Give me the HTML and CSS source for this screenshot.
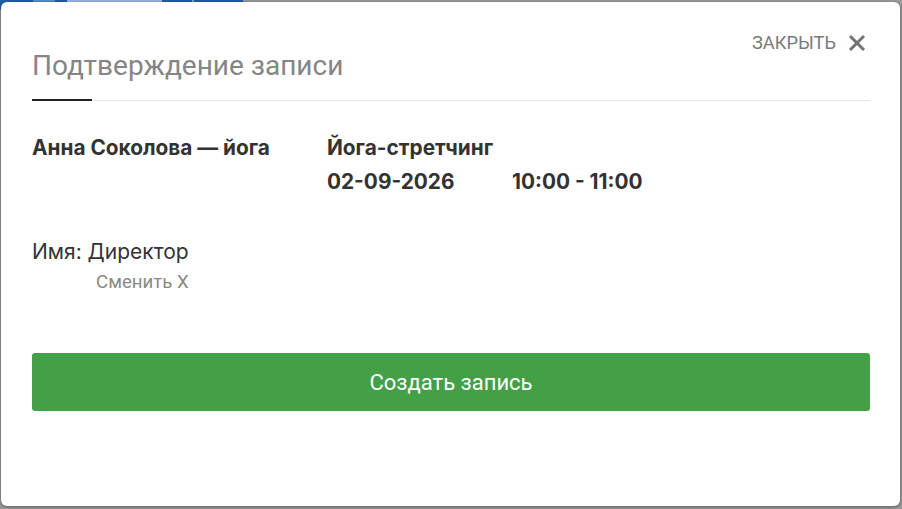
FILE: index.html
```html
<!DOCTYPE html>
<html lang="ru">
<head>
<meta charset="utf-8">
<title>Подтверждение записи</title>
<link rel="stylesheet" href="styles.css">
</head>
<body>
<div class="backdrop">
  <div class="topbar"><span class="topbar-tab"></span><span class="topbar-label"></span><span class="topbar-sep"></span></div>
</div>
<div class="modal">
  <div class="header">
    <h1 class="title">Подтверждение записи</h1>
    <button class="close">ЗАКРЫТЬ
      <svg class="close-icon" viewBox="0 0 18 18" width="18" height="18"><path d="M2 2 16 16M16 2 2 16" stroke="currentColor" stroke-width="3" fill="none"/></svg>
    </button>
  </div>
  <div class="details">
    <div class="trainer">Анна Соколова — йога</div>
    <div class="session">
      <div class="session-name">Йога-стретчинг</div>
      <div class="session-when">
        <span class="date">02-09-2026</span>
        <span class="time">10:00 - 11:00</span>
      </div>
    </div>
  </div>
  <div class="client">
    <div class="client-name">Имя: Директор</div>
    <a class="client-change">Сменить Х</a>
  </div>
  <button class="submit">Создать запись</button>
</div>
</body>
</html>
```
FILE: styles.css
```css
html, body {
  margin: 0;
  padding: 0;
  width: 902px;
  height: 509px;
  overflow: hidden;
  background: #9d9d9d;
  font-family: "Roboto", "Liberation Sans", sans-serif;
}
.backdrop {
  height: 509px;
}
.topbar {
  display: flex;
  align-items: flex-start;
  width: 243px;
  height: 10px;
  background: #1f5fb0;
}
.topbar-tab {
  width: 22px;
  height: 10px;
  margin-left: 33px;
  background: #5b8ed0;
}
.topbar-label {
  width: 95px;
  height: 3px;
  margin-left: 12px;
  background: #9fbbe0;
}
.topbar-sep {
  width: 2px;
  height: 10px;
  margin-left: 30px;
  background: #7aa0d6;
}
.modal {
  position: absolute;
  left: 1px;
  top: 2px;
  width: 899px;
  height: 504px;
  box-sizing: border-box;
  padding: 0 30px 0 31px;
  background: #fff;
  border-radius: 6px;
  box-shadow: 0 1px 4px rgba(0, 0, 0, 0.45);
  display: flex;
  flex-direction: column;
}
.header {
  display: flex;
  justify-content: space-between;
  align-items: flex-start;
  padding-top: 31px;
  border-bottom: 1px solid #e3e3e3;
}
.title {
  position: relative;
  margin: 17px 0 0;
  padding-bottom: 18px;
  font-family: "Roboto", sans-serif;
  font-weight: 400;
  font-size: 28px;
  line-height: 32px;
  color: #858585;
}
.title::after {
  content: "";
  position: absolute;
  left: 0;
  bottom: -1px;
  width: 60px;
  height: 2px;
  background: #222;
}
.close {
  display: flex;
  align-items: center;
  gap: 12px;
  margin: 0 4px 0 0;
  padding: 0;
  border: 0;
  background: none;
  font-family: "Roboto", sans-serif;
  font-size: 18.3px;
  line-height: 20px;
  color: #7a7a7a;
  cursor: pointer;
}
.close-icon {
  color: #737373;
}
.details {
  display: grid;
  grid-template-columns: 295px 1fr;
  margin-top: 35px;
  font-family: "Inter", sans-serif;
  font-weight: 700;
  font-size: 20.8px;
  line-height: 24px;
  color: #333;
}
.session {
  display: flex;
  flex-direction: column;
  gap: 10px;
}
.session-when {
  display: grid;
  grid-template-columns: 185px auto;
}
.client {
  display: flex;
  flex-direction: column;
  align-items: flex-end;
  align-self: flex-start;
  margin-top: 45px;
}
.client-name {
  font-family: "Inter", sans-serif;
  font-size: 21px;
  line-height: 26px;
  color: #333;
}
.client-change {
  margin-top: 7px;
  font-family: "Roboto", sans-serif;
  font-size: 18.6px;
  line-height: 20px;
  color: #888;
  cursor: pointer;
}
.submit {
  margin-top: 61px;
  height: 58px;
  border: 0;
  border-radius: 3px;
  background: #43a047;
  color: #fff;
  font-family: "Roboto", sans-serif;
  font-size: 22px;
  cursor: pointer;
}
```
